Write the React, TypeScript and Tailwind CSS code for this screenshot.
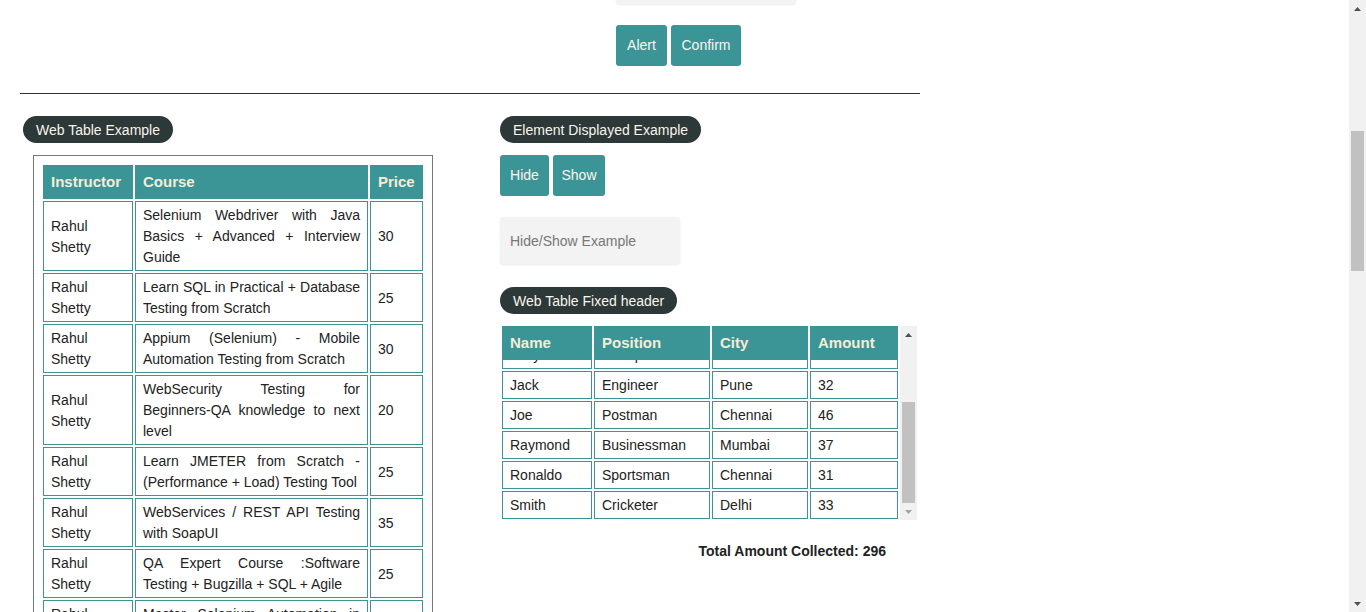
import React from 'react';

const courses = [
  ['Rahul Shetty', 'Selenium Webdriver with Java Basics + Advanced + Interview Guide', '30'],
  ['Rahul Shetty', 'Learn SQL in Practical + Database Testing from Scratch', '25'],
  ['Rahul Shetty', 'Appium (Selenium) - Mobile Automation Testing from Scratch', '30'],
  ['Rahul Shetty', 'WebSecurity Testing for Beginners-QA knowledge to next level', '20'],
  ['Rahul Shetty', 'Learn JMETER from Scratch - (Performance + Load) Testing Tool', '25'],
  ['Rahul Shetty', 'WebServices / REST API Testing with SoapUI', '35'],
  ['Rahul Shetty', 'QA Expert Course :Software Testing + Bugzilla + SQL + Agile', '25'],
  ['Rahul Shetty', 'Master Selenium Automation in simple Python Language', '25'],
  ['Rahul Shetty', 'Advanced Selenium Framework Pageobject, TestNG, Maven, Cucumber', '20'],
  ['Rahul Shetty', 'Write effective QA Resume that will turn to interview call', '0'],
];

const people = [
  ['Alex', 'Engineer', 'Chennai', '28'],
  ['Ben', 'Mechanic', 'Bengaluru', '23'],
  ['Dwayne', 'Manager', 'Kolkata', '48'],
  ['Ivory', 'Receptionist', 'Chennai', '18'],
  ['Jack', 'Engineer', 'Pune', '32'],
  ['Joe', 'Postman', 'Chennai', '46'],
  ['Raymond', 'Businessman', 'Mumbai', '37'],
  ['Ronaldo', 'Sportsman', 'Chennai', '31'],
  ['Smith', 'Cricketer', 'Delhi', '33'],
];

const Pill: React.FC<{ children: React.ReactNode }> = ({ children }) => (
  <div className="inline-flex h-[27px] items-center rounded-full bg-[#2d3838] px-[13px] text-[14px] leading-none text-[#f8f5ec]">
    {children}
  </div>
);

const TealButton: React.FC<{ label: string; width: string }> = ({ label, width }) => (
  <button className={`h-[41px] rounded-[3px] bg-[#3b9597] text-center text-[14px] text-[#fbf6ea] ${width}`}>
    {label}
  </button>
);

const Arrow: React.FC<{ up?: boolean; color: string }> = ({ up, color }) => (
  <div className="flex h-[17px] w-full items-center justify-center">
    <svg width="7" height="4" viewBox="0 0 7 4">
      <path d={up ? 'M0 4 L3.5 0 L7 4 Z' : 'M0 0 L7 0 L3.5 4 Z'} fill={color} />
    </svg>
  </div>
);

const th = 'border border-[#3b9597] bg-[#3b9597] px-[7px] py-[4px] text-left text-[15px] font-bold leading-[24px] text-[#f6ecd6]';
const td = 'border border-[#3b9597] px-[7px] pt-[3px] pb-[2px] align-middle leading-[21px]';

const App: React.FC = () => {
  return (
    <div className="flex h-[612px] w-full overflow-hidden bg-white font-['Liberation_Sans',Arial,sans-serif] text-[14px] text-[#222]">
      <main className="min-w-0 flex-1">
        <div className="ml-[20px] w-[900px]">
          {/* alert block */}
          <div className="ml-[596px]">
            <div className="-mt-[43px] h-[47px] w-[180px] rounded-[3px] bg-[#f3f3f3] shadow-[0_1px_2px_rgba(0,0,0,0.08)]" />
            <div className="mt-[21px] flex gap-[4px]">
              <TealButton label="Alert" width="w-[51px]" />
              <TealButton label="Confirm" width="w-[70px]" />
            </div>
          </div>

          <div className="mt-[27px] h-px bg-[#333]" />

          <div className="flex">
            {/* web table */}
            <section className="w-[480px] pt-[22px]">
              <div className="ml-[3px]">
                <Pill>Web Table Example</Pill>
              </div>
              <div className="mt-[12px] ml-[13px] w-[400px] border border-[#777] pt-[7px] pl-[7px]">
                <table className="w-[384px] table-fixed border-separate border-spacing-[2px]">
                  <thead>
                    <tr>
                      <th className={`${th} w-[90px]`}>Instructor</th>
                      <th className={`${th} w-[233px]`}>Course</th>
                      <th className={`${th} w-[53px]`}>Price</th>
                    </tr>
                  </thead>
                  <tbody>
                    {courses.map((c, i) => (
                      <tr key={i}>
                        <td className={td}>{c[0]}</td>
                        <td className={`${td} text-justify`}>{c[1]}</td>
                        <td className={td}>{c[2]}</td>
                      </tr>
                    ))}
                  </tbody>
                </table>
              </div>
            </section>

            {/* right column */}
            <section className="flex-1 pt-[22px]">
              <Pill>Element Displayed Example</Pill>
              <div className="mt-[12px] flex gap-[4px]">
                <TealButton label="Hide" width="w-[49px]" />
                <TealButton label="Show" width="w-[52px]" />
              </div>
              <input
                className="mt-[21px] block h-[47px] w-[180px] rounded-[3px] bg-[#f3f3f3] px-[10px] text-[14px] shadow-[0_1px_2px_rgba(0,0,0,0.08)] outline-none placeholder:text-[#777]"
                placeholder="Hide/Show Example"
              />

              <div className="mt-[23px]">
                <Pill>Web Table Fixed header</Pill>
              </div>

              <div className="mt-[12px] flex h-[194px] w-[417px]">
                <div
                  className="h-full w-[400px] overflow-y-scroll [scrollbar-width:none]"
                  ref={(el) => {
                    if (el) el.scrollTop = 113;
                  }}
                >
                  <table className="w-[400px] table-fixed border-separate border-spacing-[2px]">
                    <thead>
                      <tr>
                        <th className={`${th} sticky top-0 z-10 w-[90px]`}>Name</th>
                        <th className={`${th} sticky top-0 z-10 w-[116px]`}>Position</th>
                        <th className={`${th} sticky top-0 z-10 w-[96px]`}>City</th>
                        <th className={`${th} sticky top-0 z-10 w-[88px]`}>Amount</th>
                      </tr>
                    </thead>
                    <tbody>
                      {people.map((p) => (
                        <tr key={p[0]}>
                          {p.map((v, j) => (
                            <td key={j} className={td}>
                              {v}
                            </td>
                          ))}
                        </tr>
                      ))}
                    </tbody>
                  </table>
                </div>
                <div className="flex w-[17px] flex-col bg-[#f1f1f1]">
                  <Arrow up color="#505050" />
                  <div className="mx-[2px] mt-[59px] h-[101px] bg-[#c1c1c1]" />
                  <div className="flex-1" />
                  <Arrow color="#a3a3a3" />
                </div>
              </div>

              <div className="mt-[21px] w-[400px] pr-[14px] text-right font-bold leading-[21px]">
                Total Amount Collected: 296
              </div>
            </section>
          </div>
        </div>
      </main>

      {/* page scrollbar */}
      <div className="flex h-full w-[17px] shrink-0 flex-col bg-[#f1f1f1]">
        <Arrow up color="#505050" />
        <div className="mx-[2px] mt-[114px] h-[140px] bg-[#c1c1c1]" />
        <div className="flex-1" />
        <Arrow color="#505050" />
      </div>
    </div>
  );
};

export default App;
